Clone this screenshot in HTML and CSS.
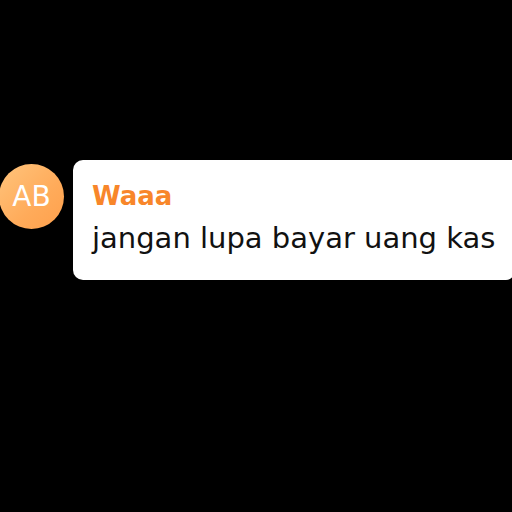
FILE: index.html
```html
<!DOCTYPE html>
<html>
<head>
<meta charset="utf-8">
<link rel="stylesheet" href="styles.css">
</head>
<body>
<div class="stage">
  <div class="message">
    <div class="avatar">AB</div>
    <div class="bubble">
      <div class="name">Waaa</div>
      <div class="text">jangan lupa bayar uang kas</div>
    </div>
  </div>
</div>
</body>
</html>
```

FILE: styles.css
```css
html, body {
  margin: 0;
  padding: 0;
  background: #000;
  width: 512px;
  height: 512px;
  overflow: hidden;
}
.stage {
  padding-top: 160px;
  font-family: "DejaVu Sans", sans-serif;
}
.message {
  display: flex;
  align-items: flex-start;
  gap: 9px;
  margin-left: -1px;
}
.avatar {
  flex: none;
  width: 65px;
  height: 65px;
  margin-top: 4px;
  border-radius: 50%;
  background: linear-gradient(135deg, #ffc47c 0%, #ffab5a 60%, #ffa04c 100%);
  color: #fff;
  font-size: 28px;
  display: flex;
  align-items: center;
  justify-content: center;
}
.bubble {
  flex: none;
  width: 441px;
  height: 120px;
  box-sizing: border-box;
  background: #fff;
  border-radius: 10px 0 8px 10px;
  padding: 21px 0 0 19px;
}
.name {
  color: #f8862a;
  font-weight: bold;
  font-size: 26px;
  line-height: 30px;
}
.text {
  color: #111;
  font-size: 29px;
  line-height: 36px;
  margin-top: 9px;
}
```
